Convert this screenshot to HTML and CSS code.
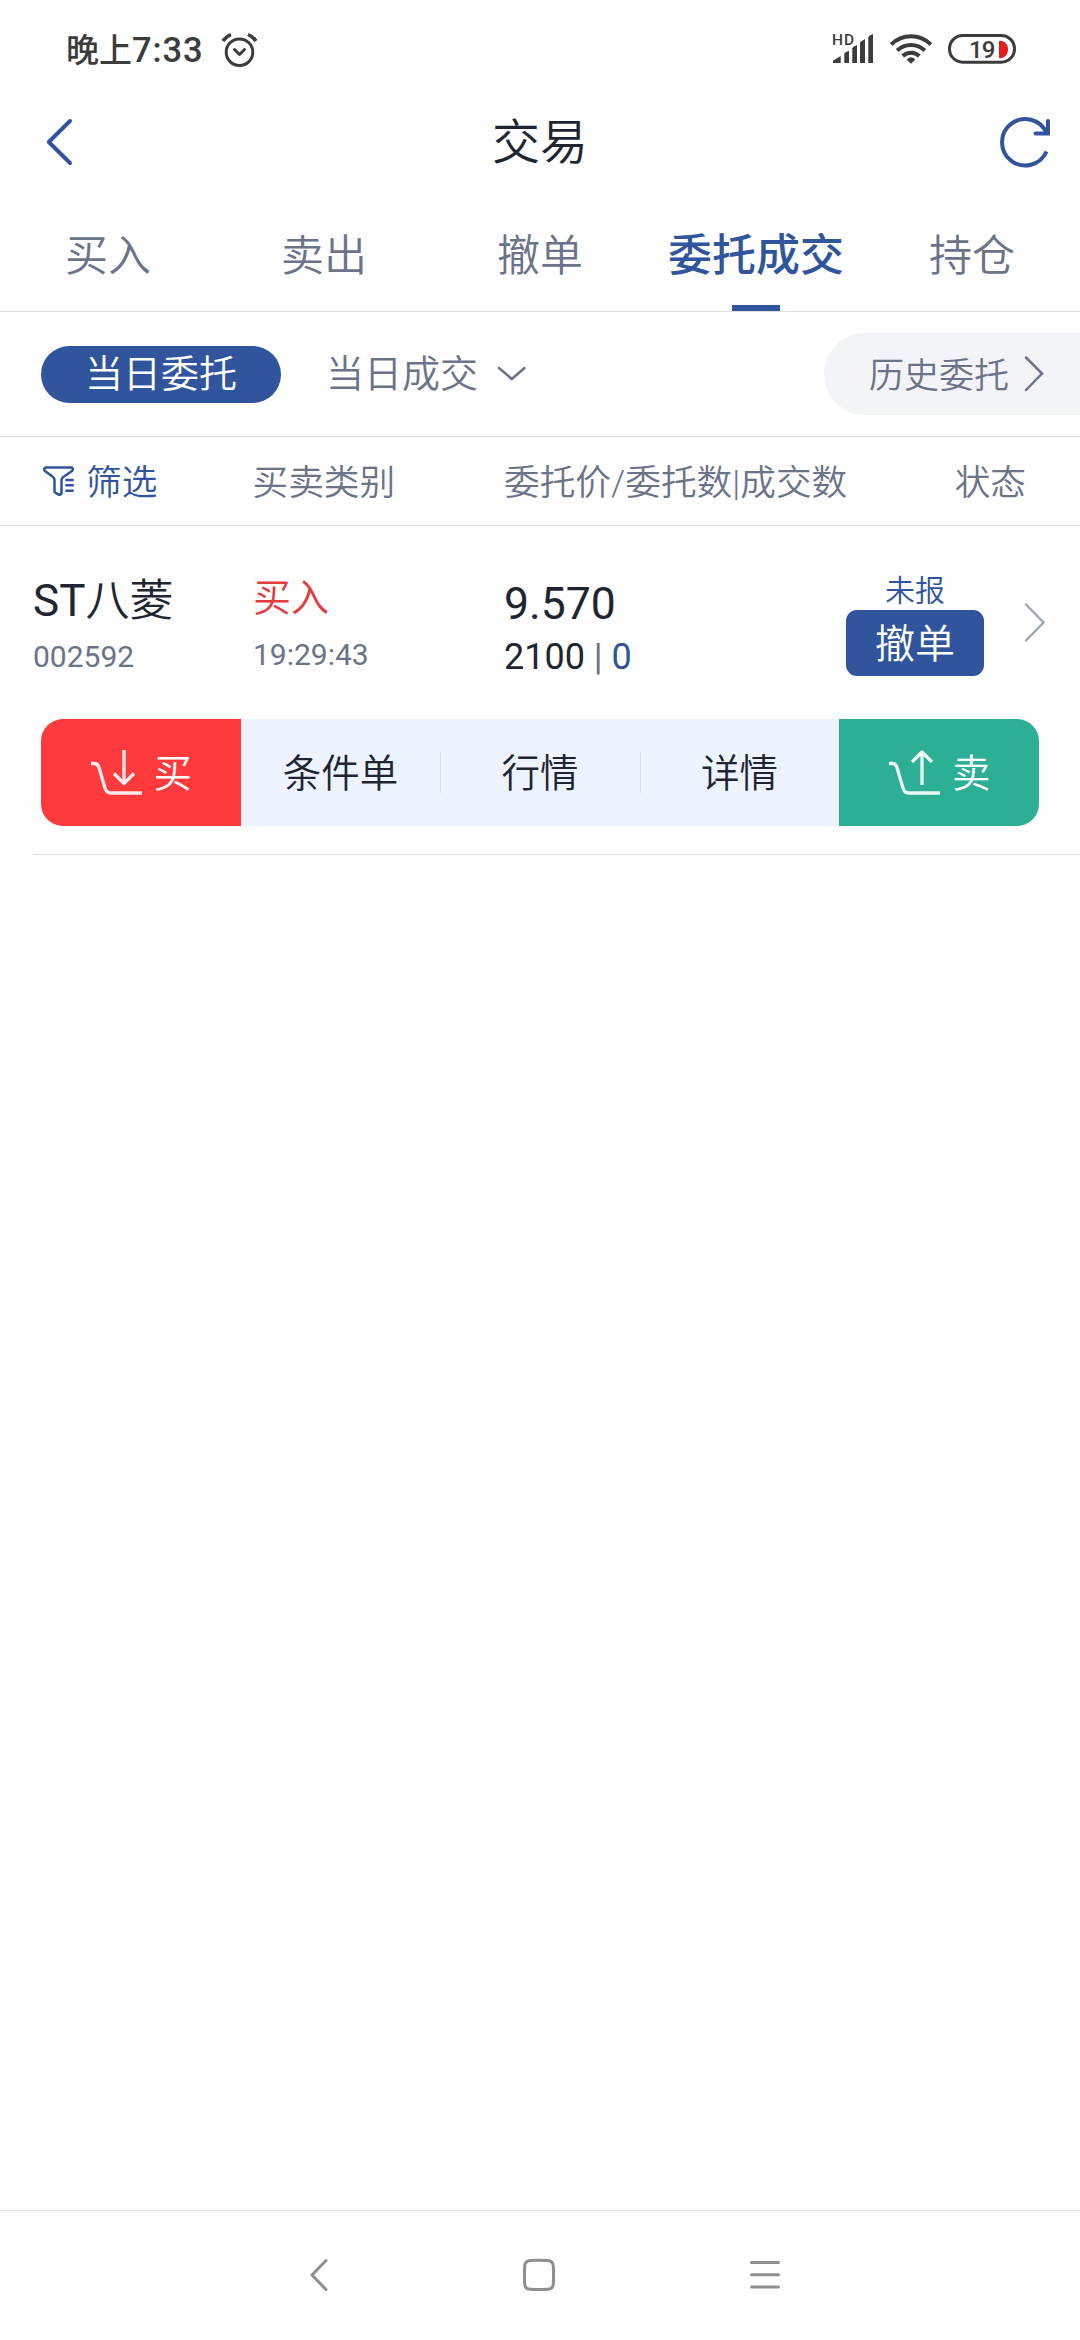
FILE: index.html
```html
<!DOCTYPE html>
<html lang="zh-CN">
<head>
<meta charset="utf-8">
<title>交易</title>
<link rel="stylesheet" href="styles.css">
</head>
<body>
<div class="screen">
  <div class="status">
    <span class="clock">晚上<span class="digits">7:33</span></span>
    <svg class="alarm" width="36" height="36" viewBox="219.500 32 36 36" fill="none" stroke="#3c3c3c" stroke-width="3">
      <circle cx="238" cy="52.200" r="13.300"/>
      <path d="M233 49.500l5 5 5-5" stroke-linejoin="round" stroke-linecap="round"/>
      <path d="M221.500 41q3-4.500 8-6.500M254.500 41q-3-4.500-8-6.500" stroke-width="3.500"/>
    </svg>
    <div class="system">
      <svg width="42" height="34" viewBox="833 32 42 34" fill="#3c3c3c">
        <text class="hd" x="833" y="44.500" textLength="22">HD</text>
        <path d="M834 63v-2q1-1 7.700-5v7zM845.300 63v-9.500q1-1.500 4.700-2.800v12.300zM853.300 63v-15q1-1.500 4.700-3v18zM861 63v-20.500q1.500-2 5-3.200v23.700zM869.300 63v-26q1.500-2 4.700-3v29z"/>
      </svg>
      <svg width="42" height="34" viewBox="890 32 42 34" fill="none" stroke="#3c3c3c" stroke-width="4">
        <path d="M891.200 44.500a28 28 0 0 1 39.600 0M897.200 50.500a20 20 0 0 1 27.600 0M902.700 56a12 12 0 0 1 16.600 0"/>
        <path d="M911 57.300q3 0 4.200 2.500l-4.200 4-4.200-4q1.200-2.500 4.200-2.500z" fill="#3c3c3c" stroke="none"/>
      </svg>
      <svg width="68" height="34" viewBox="948 32 68 34">
        <rect x="949.500" y="35.500" width="65" height="26.700" rx="13.300" fill="none" stroke="#3c3c3c" stroke-width="3"/>
        <text class="level" x="969" y="57.700">19</text>
        <path d="M999 41q1-.5 3 0a9 9 0 0 1 0 17q-2 .5-3 0z" fill="#e3201b"/>
      </svg>
    </div>
  </div>

  <header class="nav">
    <svg width="27" height="50" viewBox="46 116 27 50" fill="none" stroke="#30559c" stroke-width="4" stroke-linecap="round" stroke-linejoin="round"><path d="M70 120L48.800 141 70 162"/></svg>
    <h1>交易</h1>
    <svg width="51" height="54" viewBox="1000 114 51 54" fill="none" stroke="#30559c" stroke-width="4"><path d="M1046.500 150.500A23.200 23.200 0 1 1 1046.500 132"/><path d="M1048 120v12.500h-12.500" stroke-linecap="round"/></svg>
  </header>

  <nav class="tabs">
    <span>买入</span><span>卖出</span><span>撤单</span><span class="on">委托成交</span><span>持仓</span>
  </nav>

  <div class="switch">
    <span class="pill">当日委托</span>
    <span class="today">当日成交</span>
    <svg class="down" width="30" height="18" viewBox="497 365 30 18" fill="none" stroke="#6a7388" stroke-width="2.500" stroke-linecap="round"><path d="M499 368l12.800 11L524.500 368"/></svg>
    <span class="history"><span>历史委托</span>
      <svg width="22" height="38" viewBox="1023 354 22 38" fill="none" stroke="#6a7388" stroke-width="2.500" stroke-linecap="round"><path d="M1026 356.500l16 16-16 16.500"/></svg>
    </span>
  </div>

  <div class="cols">
    <span class="filter">
      <svg width="32" height="33" viewBox="43 464 32 33" fill="none" stroke="#30559c" stroke-width="2.500" stroke-linejoin="round"><path d="M45.500 466.500H71.500q2.500 1 .5 3.500L64 475.500q-2.500 1.500-2.500 4V492.500q-2 2-4 .5l-3-2V479.500q0-2.500-2-4L45 470q-2-2 .5-3.500z"/><path d="M65.300 479H73.700M65.300 484.300H73.700M65.300 489.700H73.700"/></svg><span>筛选</span></span>
    <span>买卖类别</span>
    <span>委托价/委托数|成交数</span>
    <span class="state">状态</span>
  </div>

  <section class="order">
    <div class="info">
      <div class="stock"><b><span class="latin">ST</span>八菱</b><small>002592</small></div>
      <div class="side"><b>买入</b><small>19:29:43</small></div>
      <div class="price"><b>9.570</b><span>2100 <i>|</i> <em>0</em></span></div>
      <div class="action"><small>未报</small><button>撤单</button></div>
      <svg class="more" width="22" height="42" viewBox="1024 601 22 42" fill="none" stroke="#a0a7b5" stroke-width="2.500" stroke-linecap="round"><path d="M1026 604.500l17.500 18-17.500 18"/></svg>
    </div>
    <div class="bar">
      <span class="buy"><svg width="54" height="48" viewBox="88 749 54 48" fill="none" stroke="#fff" stroke-opacity=".9" stroke-width="3.300"><path d="M89 763.500h3.500q3.500 0 4.500 4l6 20.500q1.500 5 5.500 5h31.500"/><path d="M122 750v33M112 773.500l10 10 10-10" stroke-linejoin="round"/></svg><span>买</span></span>
      <span>条件单</span>
      <span class="line">行情</span>
      <span class="line">详情</span>
      <span class="sell"><svg width="54" height="48" viewBox="88 749 54 48" fill="none" stroke="#fff" stroke-opacity=".9" stroke-width="3.300"><path d="M89 763.500h3.500q3.500 0 4.500 4l6 20.500q1.500 5 5.500 5h31.500"/><path d="M122 785v-33M112 762l10-10 10 10" stroke-linejoin="round"/></svg><span>卖</span></span>
    </div>
  </section>

  <footer class="system-nav">
    <svg width="20" height="36" viewBox="309 2257 20 36" fill="none" stroke="#8f8f8f" stroke-width="3" stroke-linecap="round" stroke-linejoin="round"><path d="M326 2260.500L312 2275 326 2289.500"/></svg>
    <svg width="34" height="36" viewBox="523 2257 34 36" fill="none" stroke="#8f8f8f" stroke-width="3"><path d="M531 2260.500q9-.6 18 0 5 .5 5.300 5.500.5 9 0 18-.3 5-5.300 5.200-9 .6-18 0-5-.2-5.300-5.200-.5-9 0-18 .3-5 5.300-5.500z"/></svg>
    <svg width="32" height="36" viewBox="749 2257 32 36" fill="none" stroke="#8f8f8f" stroke-width="3" stroke-linecap="round"><path d="M751.500 2262.500H778.500M751.500 2274.700H778.500M751.500 2287H778.500"/></svg>
  </footer>
</div>
</body>
</html>
```

FILE: styles.css
```css
* { box-sizing: border-box; margin: 0; padding: 0; }
body {
  background: #fefefe;
  font-family: Roboto, "Noto Sans CJK SC", sans-serif;
  font-weight: 350;
  line-height: 1.2;
  color: #1f2532;
}
svg { display: block; flex: none; overflow: visible; }
b, i, em, small, h1 { font-weight: inherit; font-style: normal; }
.screen { width: 1080px; height: 2340px; display: flex; flex-direction: column; white-space: nowrap; }

.status { height: 98px; padding: 0 64px 0 66px; display: flex; align-items: center; color: #3c3c3c; }
.clock { font-size: 33px; font-weight: 500; line-height: 40px; padding-top: 2px; }
.digits { font-size: 34.500px; letter-spacing: .9px; }
.alarm { margin-left: 17px; margin-top: 2px; }
.system { margin-left: auto; display: flex; gap: 16px; }
.hd { font-size: 15.500px; font-weight: 500; }
.level { font-size: 24px; font-weight: 500; fill: #3c3c3c; letter-spacing: -1px; }

.nav { height: 87px; padding: 0 29px 0 46px; display: grid; grid-template-columns: 1fr auto 1fr; align-items: center; }
.nav h1 { font-size: 48px; line-height: 60px; margin-right: 17px; padding-top: 2px; }
.nav svg:last-child { justify-self: end; }

.tabs { height: 127px; border-bottom: 1px solid #dddfe2; display: grid; grid-template-columns: repeat(5, 1fr); font-size: 43px; line-height: 110px; text-align: center; color: #6a7388; }
.tabs span { padding-top: 16px; }
.tabs .on { position: relative; color: #30559c; font-weight: 500; font-size: 44px; }
.tabs .on::after { content: ""; position: absolute; left: 84px; bottom: 0; width: 48px; height: 6px; background: #30559c; }

.switch { height: 125px; padding-left: 41px; border-bottom: 1px solid #dddfe2; display: flex; align-items: center; font-size: 38px; color: #6a7388; }
.pill { width: 240px; height: 57px; border-radius: 29px; background: #30559c; color: #fff; text-align: center; line-height: 57px; }
.today { margin-left: 45px; line-height: 57px; }
.down { margin-left: 19px; }
.history { margin-left: auto; width: 256px; height: 82px; padding-left: 45px; border-radius: 41px 0 0 41px; background: #f3f4f7; display: flex; align-items: center; gap: 14px; font-size: 35px; }
.history span { padding-top: 5px; }

.cols { height: 89px; padding: 0 54px 0 43px; border-bottom: 1px solid #dddfe2; display: grid; grid-template-columns: 209.500px 251.500px 1fr auto; align-items: center; font-size: 35.700px; color: #6a7388; }
.cols > span:not(.filter), .filter span { padding-top: 5px; }
.filter { display: flex; align-items: center; gap: 11px; color: #30559c; }

.order { height: 329px; margin-left: 33px; border-bottom: 1px solid #dddfe2; }
.info { height: 193px; display: grid; grid-template-columns: 220px 251px 342px 138px 1fr; }
.info > div { display: flex; flex-direction: column; }
.info small { font-size: 30px; color: #6a7388; font-weight: 400; }
.latin { font-weight: 400; }
.stock b { font-size: 44px; line-height: 50px; margin-top: 50px; }
.stock small { line-height: 36px; margin-top: 13px; }
.side b { font-size: 38px; line-height: 50px; margin-top: 47px; color: #e33c3c; }
.side small { line-height: 36px; margin-top: 14px; }
.price b { font-size: 44.500px; line-height: 50px; margin-top: 53px; font-weight: 400; }
.price span { font-size: 36px; line-height: 40px; margin-top: 8px; font-weight: 400; }
.price i { color: #6a7388; }
.price em { color: #30559c; }
.action { align-items: center; }
.info .action small { font-weight: 350; color: #30559c; line-height: 36px; margin-top: 47px; }
.action button { width: 138px; height: 66px; margin-top: 1px; padding-top: 4px; border: 0; border-radius: 11px; background: #30559c; color: #fff; font: 350 40px/62px Roboto, "Noto Sans CJK SC", sans-serif; }
.more { margin: 75px 0 0 40px; }

.bar { width: 998px; height: 107px; margin-left: 8px; border-radius: 22px; overflow: hidden; background: #edf4ff; display: grid; grid-template-columns: repeat(5, 1fr); font-size: 38.500px; }
.bar > span { display: flex; align-items: center; justify-content: center; padding-top: 4px; }
.bar .line { background: linear-gradient(#d9dde8, #d9dde8) 0 33px / 1px 41px no-repeat; }
.bar .buy, .bar .sell { color: #fff; gap: 10px; padding: 0; }
.bar .buy { background: #ff3a3c; }
.bar .sell { background: #2caf95; }
.buy span, .sell span { padding-top: 4px; }

.system-nav { height: 130px; margin-top: auto; padding: 0 299px 2px 309px; border-top: 1px solid #e3e3e3; display: flex; align-items: center; justify-content: space-between; }
```
